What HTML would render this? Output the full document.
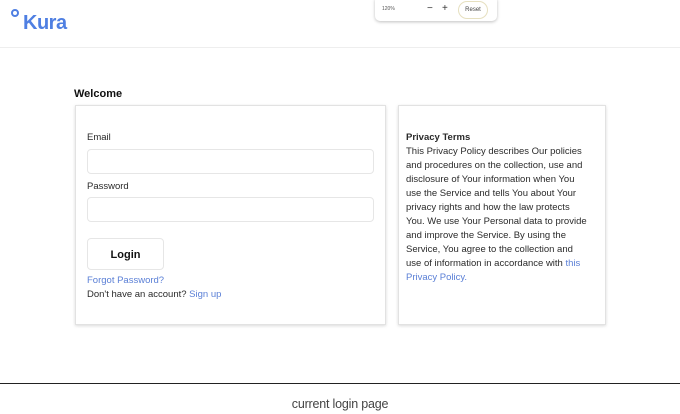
<!DOCTYPE html>
<html><head><meta charset="utf-8"><style>
*{margin:0;padding:0;box-sizing:border-box}
body{width:680px;height:414px;background:#fff;font-family:"Liberation Sans",sans-serif;position:relative;overflow:hidden;color:#222}
.a{position:absolute;white-space:nowrap}
.card{position:absolute;border:1px solid #e2e2e2;box-shadow:0 1px 3px rgba(0,0,0,.15);background:#fff}
.inp{position:absolute;border:1px solid #e6e6e6;border-radius:4px;background:#fff}
.t{font-size:9.5px;color:#2a2a2a}
.link{color:#5a7fd6}
.rt{position:absolute;left:406px;font-size:9.5px;line-height:14px;color:#2a2a2a;white-space:nowrap}
</style></head><body>
<div class="a" style="left:11px;top:9px;width:8px;height:8px;border:2px solid #4f7fe2;border-radius:50%"></div>
<div class="a" style="left:23px;top:12px;font-size:20px;font-weight:bold;color:#4f7fe2;letter-spacing:-0.5px">Kura</div>
<div class="a" style="left:0;top:47px;width:680px;height:1px;background:#eee"></div>
<div class="a" style="left:375px;top:-4px;width:122px;height:25px;background:#fff;border-radius:5px;box-shadow:0 1px 3px rgba(0,0,0,.25)"></div>
<div class="a" style="left:382px;top:6px;font-size:5px;color:#555">120%</div>
<div class="a" style="left:427px;top:3px;font-size:10px;color:#333">−</div>
<div class="a" style="left:442px;top:3px;font-size:10px;color:#333">+</div>
<div class="a" style="left:458px;top:1px;width:30px;height:18px;border:1px solid #e6e0c0;border-radius:9px;font-size:6px;text-align:center;line-height:16px;color:#444">Reset</div>
<div class="a" style="left:74px;top:88px;font-size:11px;font-weight:bold;color:#111">Welcome</div>
<div class="card" style="left:75px;top:105px;width:311px;height:220px"></div>
<div class="a t" style="left:87px;top:132px">Email</div>
<div class="inp" style="left:87px;top:149px;width:287px;height:25px"></div>
<div class="a t" style="left:87px;top:181px">Password</div>
<div class="inp" style="left:87px;top:197px;width:287px;height:25px"></div>
<div class="inp" style="left:87px;top:238px;width:77px;height:32px;text-align:center;line-height:32px;font-size:11px;font-weight:bold;color:#111">Login</div>
<div class="a t link" style="left:87px;top:275px">Forgot Password?</div>
<div class="a t" style="left:87px;top:289px">Don't have an account? <span class="link">Sign up</span></div>
<div class="card" style="left:398px;top:105px;width:208px;height:220px"></div>
<div class="rt" style="top:131px"><b>Privacy Terms</b><br>This Privacy Policy describes Our policies<br>and procedures on the collection, use and<br>disclosure of Your information when You<br>use the Service and tells You about Your<br>privacy rights and how the law protects<br>You. We use Your Personal data to provide<br>and improve the Service. By using the<br>Service, You agree to the collection and<br>use of information in accordance with <span class="link">this</span><br><span class="link">Privacy Policy.</span></div>
<div class="a" style="left:0;top:383px;width:680px;height:1px;background:#222"></div>
<div class="a" style="left:0;width:680px;top:397px;text-align:center;font-size:12.5px;color:#444;letter-spacing:-0.2px">current login page</div>
</body></html>
